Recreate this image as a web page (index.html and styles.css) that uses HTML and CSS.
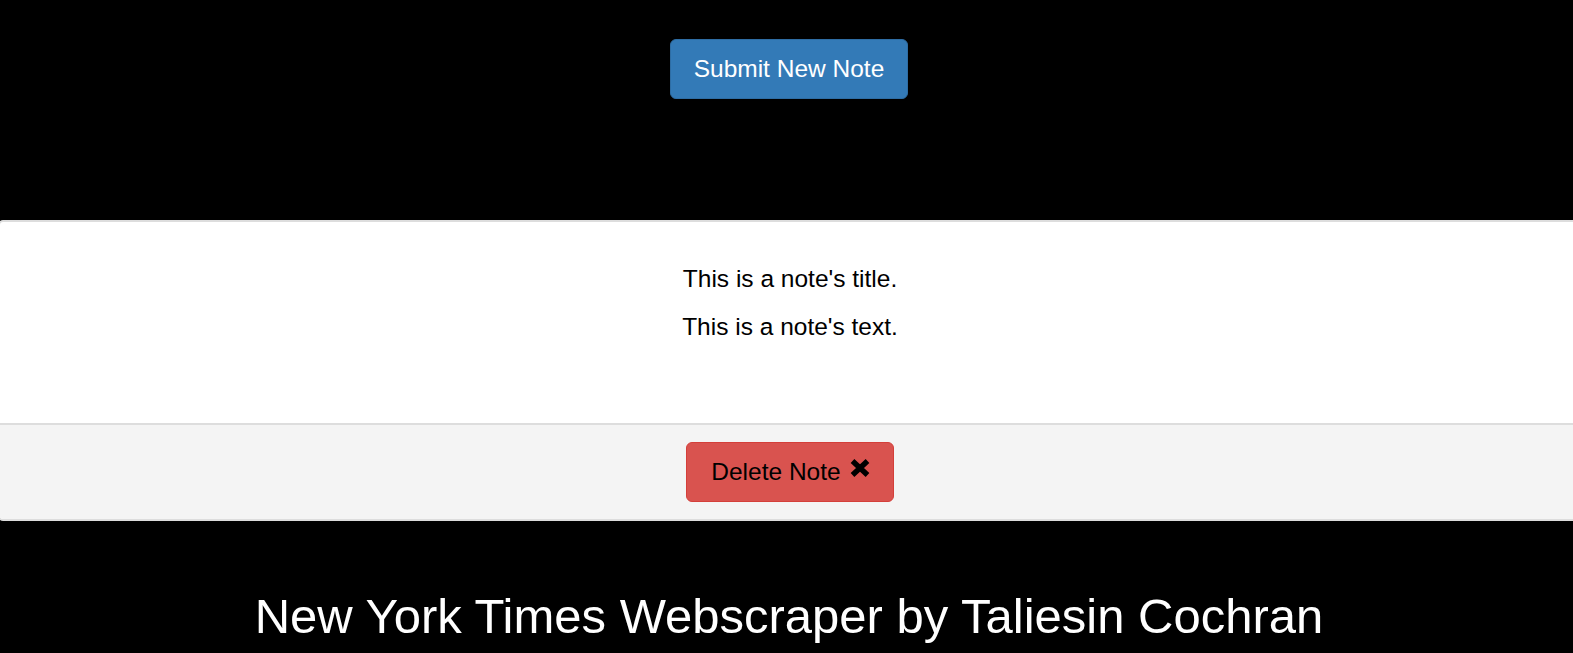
FILE: index.html
```html
<!DOCTYPE html>
<html lang="en">
<head>
<meta charset="utf-8">
<title>New York Times Webscraper</title>
<link rel="stylesheet" href="styles.css">
</head>
<body>
<div class="top">
  <button class="btn btn-primary">Submit New Note</button>
</div>
<div class="panel">
  <div class="panel-body">
    <p class="note-title">This is a note's title.</p>
    <p class="note-text">This is a note's text.</p>
  </div>
  <div class="panel-footer">
    <button class="btn btn-danger">Delete Note<svg class="icon-x" width="22" height="20" viewBox="0 0 22 20" aria-hidden="true"><path d="M3.5 3 L18.5 17 M18.5 3 L3.5 17" stroke="#000" stroke-width="5.4" stroke-linecap="butt" fill="none"/></svg></button>
  </div>
</div>
<h1 class="site-title">New York Times Webscraper by Taliesin Cochran</h1>
</body>
</html>
```
FILE: styles.css
```css
html, body {
  margin: 0;
  padding: 0;
  background: #000;
  overflow: hidden;
  font-family: "Liberation Sans", Arial, sans-serif;
}

.top {
  display: flex;
  justify-content: center;
  padding: 39px 0 0 5px;
  margin-bottom: 121px;
}

.btn {
  box-sizing: border-box;
  height: 60px;
  line-height: 58px;
  padding: 0 23px;
  font-family: "Liberation Sans", Arial, sans-serif;
  font-size: 24.5px;
  border-radius: 6px;
  border: 1px solid transparent;
  cursor: pointer;
  white-space: nowrap;
}

.btn-primary {
  background: #337ab7;
  border-color: #2e6da4;
  color: #fff;
}

.btn-danger {
  background: #d9534f;
  border-color: #d43f3a;
  color: #000;
  padding: 0 22px 0 24px;
}

.icon-x {
  margin-left: 8px;
  vertical-align: 2px;
}

.panel {
  background: #fff;
  margin-left: -2px;
  border-top: 2px solid #ddd;
  border-bottom: 2px solid #ddd;
  border-left: 2px solid #ddd;
  border-radius: 5px 0 0 5px;
  overflow: hidden;
}

.panel-body {
  padding: 41px 0 80px 7px;
  text-align: center;
  color: #000;
  font-size: 24.5px;
  line-height: 32px;
}

.panel-body p {
  margin: 0;
}

.note-title {
  margin-bottom: 16px !important;
}

.panel-footer {
  background: #f4f4f4;
  border-top: 2px solid #ddd;
  padding: 17px 0 17px 7px;
  display: flex;
  justify-content: center;
}

.site-title {
  margin: 69px 0 0;
  padding-left: 5px;
  text-align: center;
  color: #fff;
  font-weight: normal;
  font-size: 49px;
  line-height: 1.1;
}
```
